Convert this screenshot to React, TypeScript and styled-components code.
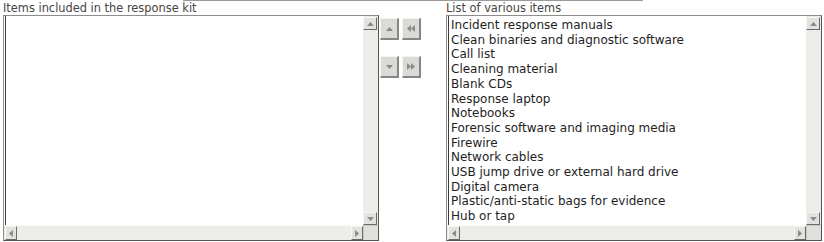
import styled, { createGlobalStyle } from 'styled-components';

const GlobalStyle = createGlobalStyle`
	body {
		margin: 0;
		background: #ffffff;
		font-family: Verdana, "DejaVu Sans", sans-serif;
	}
`;

const Page = styled.div`
	display: flex;
	flex-direction: column;
	padding-left: 3px;
	width: 821px;
	height: 242px;
	overflow: hidden;
`;
const TopRule = styled.div`
	margin-left: 180px;
	width: 460px;
	height: 1px;
	background: #9a9a9a;
`;
const Row = styled.div`
	display: flex;
	align-items: flex-start;
`;
const Column = styled.div`
	display: flex;
	flex-direction: column;
	width: 376px;
`;
const Label = styled.div`
	height: 14px;
	padding-top: 1px;
	box-sizing: border-box;
	font-size: 11.4px;
	line-height: 13px;
	color: #454545;
	white-space: nowrap;
`;
const ListBox = styled.div`
	display: grid;
	grid-template-columns: 1fr 15px;
	grid-template-rows: 1fr 15px;
	height: 226px;
	box-sizing: border-box;
	border: 1px solid #8c8c8c;
	border-right-color: #555;
	border-bottom-color: #555;
	background: #fff;
`;
const Content = styled.ul`
	margin: 0;
	padding: 2px 0 0 4px;
	list-style: none;
	overflow: hidden;
	box-shadow: inset 1px 0 0 #fff, inset 2px 0 0 #3c3c3c;
`;
const Item = styled.li`
	font-size: 12px;
	line-height: 14.7px;
	color: #1e1e1e;
	white-space: nowrap;
`;
const VTrack = styled.div`
	display: flex;
	flex-direction: column;
	justify-content: space-between;
	background: #ecece8;
	padding-top: 1px;
`;
const HTrack = styled.div`
	display: flex;
	justify-content: space-between;
	background: #ecece8;
	border-top: 1px solid #f8f8f6;
	padding-left: 1px;
`;
const Corner = styled.div`
	background: #e0e0dc;
	border-left: 1px solid #c8c8c4;
	border-top: 1px solid #c8c8c4;
`;
const ArrowBtn = styled.div<{ $w: number; $h: number }>`
	display: flex;
	align-items: center;
	justify-content: center;
	width: ${(p) => p.$w}px;
	height: ${(p) => p.$h}px;
	box-sizing: border-box;
	background: #e2e2de;
	border: 1px solid #f6f6f4;
	border-right-color: #6a6a6a;
	border-bottom-color: #6a6a6a;
`;
const Buttons = styled.div`
	display: grid;
	grid-template-columns: 19px 19px;
	grid-template-rows: 22px 22px;
	column-gap: 3px;
	row-gap: 16px;
	margin: 17px 25px 0 1px;
`;
const MoveBtn = styled.button`
	display: flex;
	align-items: center;
	justify-content: center;
	padding: 0;
	width: 19px;
	height: 22px;
	box-sizing: border-box;
	background: #dadad6;
	border: 1px solid #f4f4f2;
	border-right: 2px solid #868686;
	border-bottom: 2px solid #868686;
`;

type Dir = 'up' | 'down' | 'left' | 'right';

const tri: Record<Dir, string> = {
	up: '0,4 3.5,0 7,4',
	down: '0,0 3.5,4 7,0',
	left: '4,0 0,3.5 4,7',
	right: '0,0 4,3.5 0,7',
};

const Tri = ({ dir, color = '#8a8a8a' }: { dir: Dir; color?: string }) => {
	const horiz = dir === 'left' || dir === 'right';
	return (
		<svg width={horiz ? 4 : 7} height={horiz ? 7 : 4} viewBox={horiz ? '0 0 4 7' : '0 0 7 4'}>
			<polygon points={tri[dir]} fill={color} />
		</svg>
	);
};

const Double = ({ dir }: { dir: 'left' | 'right' }) => (
	<svg width="8" height="7" viewBox="0 0 8 7">
		{dir === 'left' ? (
			<>
				<polygon points="4,0 0,3.5 4,7" fill="#8a8a8a" />
				<polygon points="8,0 4,3.5 8,7" fill="#8a8a8a" />
			</>
		) : (
			<>
				<polygon points="0,0 4,3.5 0,7" fill="#8a8a8a" />
				<polygon points="4,0 8,3.5 4,7" fill="#8a8a8a" />
			</>
		)}
	</svg>
);

const ScrollList = ({ items }: { items: string[] }) => (
	<ListBox>
		<Content>
			{items.map((it) => (
				<Item key={it}>{it}</Item>
			))}
		</Content>
		<VTrack>
			<ArrowBtn $w={14} $h={13}>
				<Tri dir="up" />
			</ArrowBtn>
			<ArrowBtn $w={14} $h={13}>
				<Tri dir="down" />
			</ArrowBtn>
		</VTrack>
		<HTrack>
			<ArrowBtn $w={12} $h={14}>
				<Tri dir="left" />
			</ArrowBtn>
			<ArrowBtn $w={12} $h={14}>
				<Tri dir="right" />
			</ArrowBtn>
		</HTrack>
		<Corner />
	</ListBox>
);

const various = [
	'Incident response manuals',
	'Clean binaries and diagnostic software',
	'Call list',
	'Cleaning material',
	'Blank CDs',
	'Response laptop',
	'Notebooks',
	'Forensic software and imaging media',
	'Firewire',
	'Network cables',
	'USB jump drive or external hard drive',
	'Digital camera',
	'Plastic/anti-static bags for evidence',
	'Hub or tap',
];

export default function App() {
	return (
		<>
			<GlobalStyle />
			<Page>
				<TopRule />
				<Row>
					<Column>
						<Label>Items included in the response kit</Label>
						<ScrollList items={[]} />
					</Column>
					<Buttons>
						<MoveBtn>
							<Tri dir="up" />
						</MoveBtn>
						<MoveBtn>
							<Double dir="left" />
						</MoveBtn>
						<MoveBtn>
							<Tri dir="down" />
						</MoveBtn>
						<MoveBtn>
							<Double dir="right" />
						</MoveBtn>
					</Buttons>
					<Column>
						<Label>List of various items</Label>
						<ScrollList items={various} />
					</Column>
				</Row>
			</Page>
		</>
	);
}
